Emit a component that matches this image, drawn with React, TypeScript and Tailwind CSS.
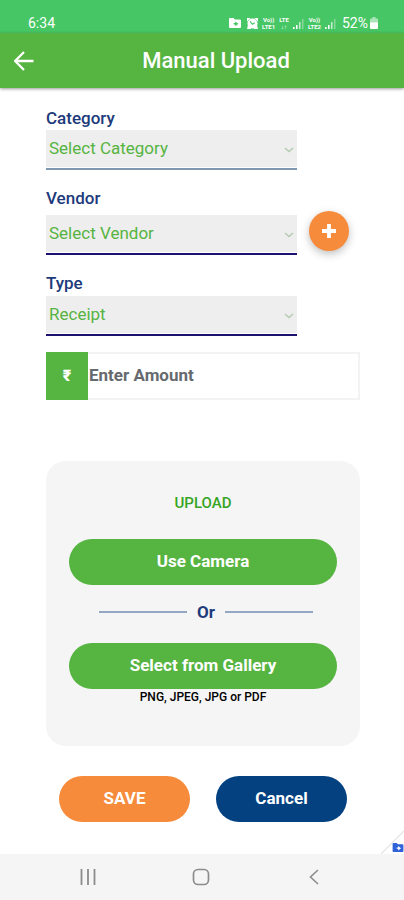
import { useState } from 'react';
import type { ReactNode } from 'react';

function FolderIcon({ className }: { className: string }) {
    return (
        <svg viewBox="0 0 12 10" className={className} aria-hidden="true">
            <path fill="currentColor" fillRule="evenodd" d="M1 0h3.6l1.3 1.5H11a1 1 0 0 1 1 1V9a1 1 0 0 1-1 1H1a1 1 0 0 1-1-1V1a1 1 0 0 1 1-1ZM6.2 3.4v1.7H4.6v1.4h1.6v1.7l3.2-2.4Z" />
        </svg>
    );
}

function SignalIcon() {
    return (
        <svg viewBox="0 0 11 11" className="h-[11px] w-[11px]" aria-hidden="true">
            <path fill="#fff" d="M0 9h1.6v2H0zM3 7h1.6v4H3z" />
            <path fill="#fff" fillOpacity=".7" d="M6 4h1.5v7H6z" />
            <path fill="#fff" fillOpacity=".35" d="M9 1h1.5v10H9z" />
        </svg>
    );
}

function NetworkLabel({ top, bottom }: { top: string; bottom: string }) {
    return (
        <span className="flex flex-col items-center text-[6px] leading-[7px] font-bold">
            <span>{top}</span>
            <span>{bottom}</span>
        </span>
    );
}

function StatusBar() {
    return (
        <div className="flex h-[33px] items-end justify-between bg-[#46c664] pr-[26px] pb-0.5 pl-7 text-white">
            <span className="text-sm leading-4">6:34</span>
            <div className="flex h-4 items-center">
                <FolderIcon className="mr-1.5 h-2.5 w-3" />
                <svg viewBox="0 0 12 12" className="mr-1 h-[11px] w-[11px]" aria-hidden="true">
                    <path fill="#fff" d="M0 0h4L0 4zM12 0H8l4 4zM0 12l1-4 4 4zM12 12l-1-4-4 4z" />
                    <circle cx="6" cy="6" r="5.5" fill="#fff" />
                    <path d="M3.3 3.600 6 6.800l2.500-1.600" fill="none" stroke="#46c664" strokeWidth="1.200" />
                </svg>
                <NetworkLabel top="Vo))" bottom="LTE1" />
                <span className="ml-1"><NetworkLabel top="LTE" bottom="↓↑" /></span>
                <span className="ml-1"><SignalIcon /></span>
                <span className="ml-1"><NetworkLabel top="Vo))" bottom="LTE2" /></span>
                <span className="ml-1"><SignalIcon /></span>
                <span className="ml-1.5 text-sm leading-4">52%</span>
                <svg viewBox="0 0 8 12" className="ml-0.5 h-3 w-2" aria-hidden="true">
                    <path fill="#fff" fillOpacity=".55" d="M2.500 0h3v1.500H7a1 1 0 0 1 1 1V6H0V2.500a1 1 0 0 1 1-1h1.500z" />
                    <path fill="#fff" d="M0 5.500h8V11a1 1 0 0 1-1 1H1a1 1 0 0 1-1-1z" />
                </svg>
            </div>
        </div>
    );
}

type SelectFieldProps = {
    id: string;
    label: string;
    options: string[];
    labelClass?: string;
    lineClass?: string;
    children?: ReactNode;
};

function SelectField({ id, label, options, labelClass = '', lineClass = 'border-[#1b1270]', children }: SelectFieldProps) {
    return (
        <div>
            <label htmlFor={id} className={`block h-6 text-[17px] leading-6 font-medium text-[#1d3a7c] ${labelClass}`}>
                {label}
            </label>
            <div className="flex items-start">
                <div className={`relative h-10 w-4/5 border-b-2 pb-px ${lineClass}`}>
                    <select id={id} className="h-full w-full appearance-none bg-[#eeeeee] pt-px pr-6 pl-[3px] text-[17px] text-[#56b441] outline-none">
                        {options.map((option) => (
                            <option key={option}>{option}</option>
                        ))}
                    </select>
                    <svg viewBox="0 0 10 6" className="pointer-events-none absolute top-[17px] right-[3px] h-1.5 w-2.5" aria-hidden="true">
                        <path d="M1 1l4 3.500L9 1" fill="none" stroke="#b3cdb0" strokeWidth="1.600" />
                    </svg>
                </div>
                {children}
            </div>
        </div>
    );
}

export default function App() {
    const [amount, setAmount] = useState('');

    return (
        <div className="relative flex min-h-screen flex-col bg-white font-[Roboto,sans-serif]">
            <StatusBar />
            <header className="flex h-[55px] items-center bg-[#56b441] px-3.5 text-white shadow-[0_1px_3px_rgba(0,0,0,0.4)]">
                <button type="button" aria-label="Back" className="h-5 w-5">
                    <svg viewBox="0 0 20 20" className="h-5 w-5" aria-hidden="true">
                        <path d="M19.500 10H1.500M10 1 1.200 10 10 19" fill="none" stroke="#fff" strokeWidth="2.300" />
                    </svg>
                </button>
                <h1 className="flex-1 pl-2 text-center text-[22px] leading-7 font-medium">Manual Upload</h1>
            </header>

            <main className="flex flex-col pt-[18px] pr-11 pl-[46px]">
                <form className="flex flex-col gap-4">
                    <SelectField id="category" label="Category" options={['Select Category']} lineClass="border-[#8098b0]" />
                    <SelectField id="vendor" label="Vendor" options={['Select Vendor']} labelClass="mb-[5px]">
                        <button type="button" aria-label="Add vendor" className="-mt-1 ml-3 flex h-10 w-10 shrink-0 items-center justify-center rounded-full bg-[#f68b3c] shadow-[0_3px_8px_rgba(0,0,0,0.25)]">
                            <svg viewBox="0 0 14 14" className="h-3.5 w-3.5" aria-hidden="true">
                                <path d="M7 0v14M0 7h14" stroke="#fff" strokeWidth="3.800" />
                            </svg>
                        </button>
                    </SelectField>
                    <SelectField id="type" label="Type" options={['Receipt']} labelClass="mb-px" />
                    <div className="flex h-12">
                        <label htmlFor="amount" className="flex w-[42px] items-center justify-center bg-[#56b441] text-base font-black text-white">₹</label>
                        <input
                            id="amount"
                            inputMode="decimal"
                            placeholder="Enter Amount"
                            value={amount}
                            onChange={(e) => setAmount(e.target.value)}
                            className="min-w-0 flex-1 border-2 border-l-0 border-[#f3f3f3] pl-px text-[17px] font-bold text-[#666a6e] outline-none placeholder:text-[#666a6e]"
                        />
                    </div>
                </form>

                <section className="mt-[61px] flex flex-col items-center rounded-[20px] bg-[#f5f5f5] px-[23px] pt-8 pb-10 text-center">
                    <h2 className="text-[15px] leading-5 font-medium text-[#36a41f]">UPLOAD</h2>
                    <button type="button" className="mt-[26px] h-[46px] w-full rounded-full bg-[#56b441] text-[17px] font-bold text-white">Use Camera</button>
                    <div className="flex h-[58px] w-full items-center gap-2.5 pr-6 pb-1 pl-[30px]">
                        <span className="h-0.5 flex-1 bg-[#94a8c4]" />
                        <span className="text-[17px] leading-6 font-bold text-[#1d3a7c]">Or</span>
                        <span className="h-0.5 flex-1 bg-[#94a8c4]" />
                    </div>
                    <button type="button" className="h-[46px] w-full rounded-full bg-[#56b441] text-[17px] font-bold text-white">Select from Gallery</button>
                    <p className="text-[12px] leading-[17px] font-medium text-black">PNG, JPEG, JPG or PDF</p>
                </section>

                <div className="mt-[30px] mb-8 flex gap-[26px] px-[13px]">
                    <button type="button" className="h-[46px] flex-1 rounded-full bg-[#f68b3c] text-[17px] font-bold text-white">SAVE</button>
                    <button type="button" className="h-[46px] flex-1 rounded-full bg-[#034181] text-[17px] font-bold text-white">Cancel</button>
                </div>
            </main>

            <nav className="relative mt-auto flex h-[47px] items-center justify-between bg-[#f5f5f5] pr-[82px] pb-0.5 pl-20">
                <div className="absolute right-0 bottom-full overflow-hidden">
                    <svg viewBox="0 0 24 24" className="h-6 w-6" aria-hidden="true">
                        <path d="M1 24 24 1" stroke="#e4e4e4" strokeWidth="1.200" />
                    </svg>
                    <FolderIcon className="absolute right-0 bottom-0.5 h-[9px] w-3 text-[#2f62d9]" />
                </div>
                <button type="button" aria-label="Recent apps">
                    <svg viewBox="0 0 16 16" className="h-4 w-4" aria-hidden="true">
                        <path d="M1.500 0v16M8 0v16M14.500 0v16" stroke="#8c8c8c" strokeWidth="1.800" />
                    </svg>
                </button>
                <button type="button" aria-label="Home">
                    <svg viewBox="0 0 18 18" className="h-[18px] w-[18px]" aria-hidden="true">
                        <rect x="1.500" y="1.500" width="15" height="15" rx="4.500" fill="none" stroke="#8c8c8c" strokeWidth="1.700" />
                    </svg>
                </button>
                <button type="button" aria-label="Go back">
                    <svg viewBox="0 0 16 16" className="h-4 w-4" aria-hidden="true">
                        <path d="M12 1 4.500 8 12 15" fill="none" stroke="#8c8c8c" strokeWidth="1.600" />
                    </svg>
                </button>
            </nav>
        </div>
    );
}
